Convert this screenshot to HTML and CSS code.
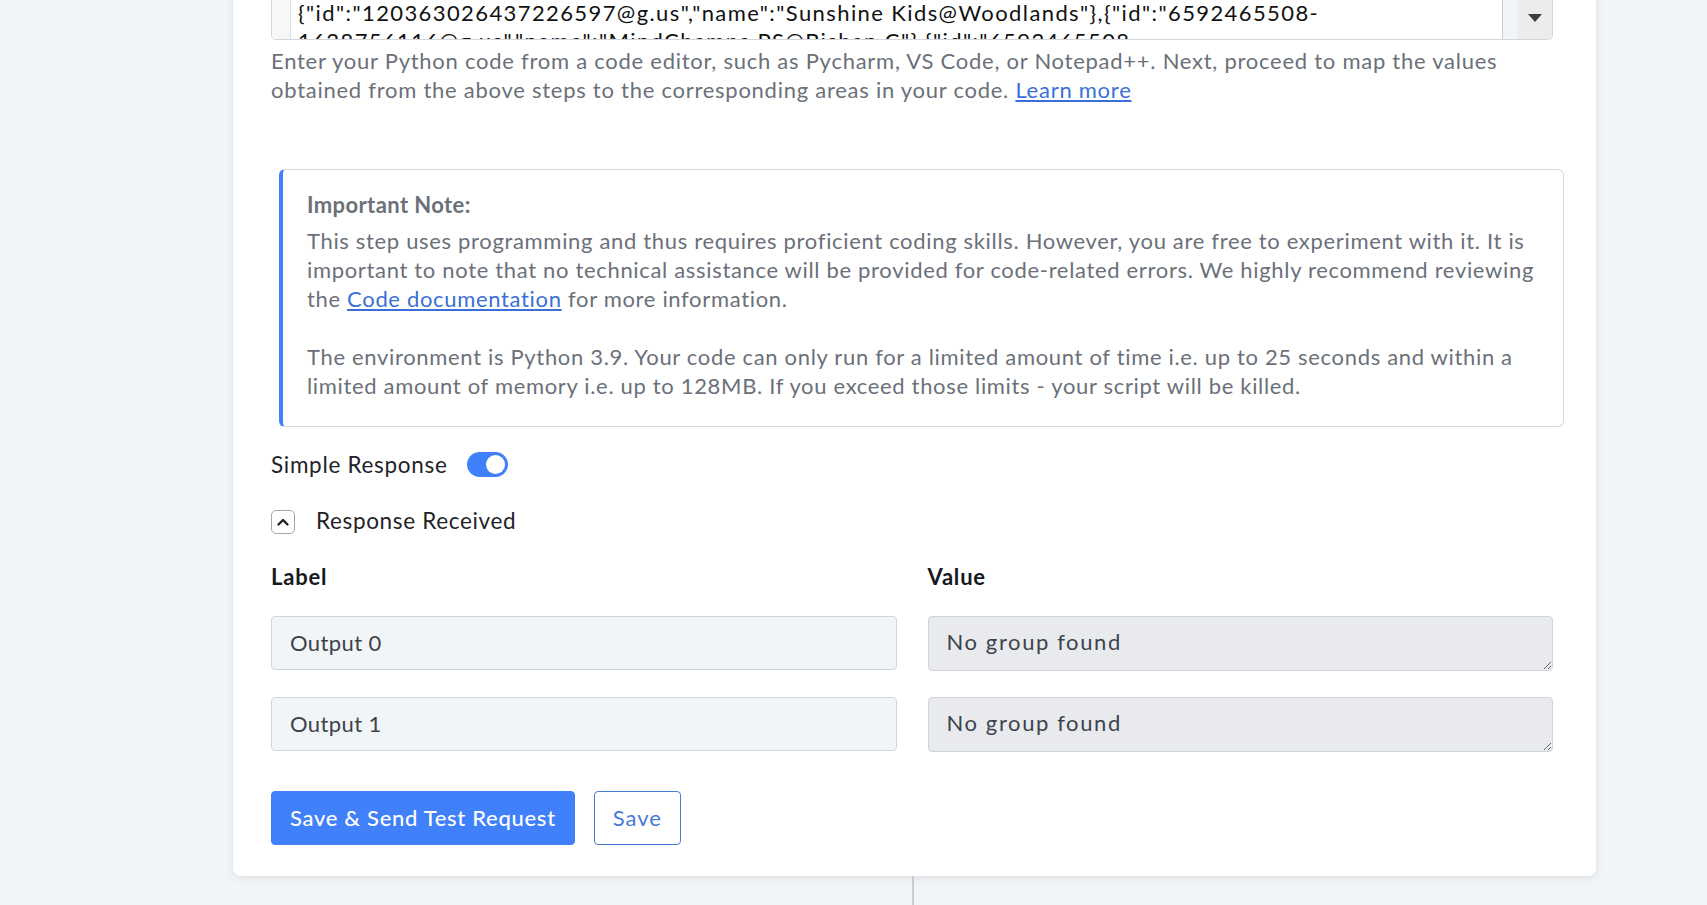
FILE: index.html
```html
<!DOCTYPE html>
<html>
<head>
  <title>Code Step</title>
  <link rel="stylesheet" href="styles.css">
</head>
<body>
  <div class="page">
    <div class="card">
      <div class="code-field">
        <div class="gutter"></div>
        <div class="code-text">{"id":"120363026437226597@g.us","name":"Sunshine Kids@Woodlands"},{"id":"6592465508-<br>1628756116@g.us","name":"MindChamps PS@Bishan C"},{"id":"6592465508</div>
        <div class="scroll-track"></div>
        <div class="scroll-btn"><span class="arrow"></span></div>
      </div>
      <p class="help">Enter your Python code from a code editor, such as Pycharm, VS Code, or Notepad++. Next, proceed to map the values<br>obtained from the above steps to the corresponding areas in your code. <a href="#">Learn more</a></p>

      <div class="note">
        <div class="note-title">Important Note:</div>
        <p>This step uses programming and thus requires proficient coding skills. However, you are free to experiment with it. It is<br>important to note that no technical assistance will be provided for code-related errors. We highly recommend reviewing<br>the <a href="#">Code documentation</a> for more information.</p>
        <p>The environment is Python 3.9. Your code can only run for a limited amount of time i.e. up to 25 seconds and within a<br>limited amount of memory i.e. up to 128MB. If you exceed those limits - your script will be killed.</p>
      </div>

      <div class="toggle-row">
        <span>Simple Response</span>
        <span class="switch on"><span class="knob"></span></span>
      </div>

      <div class="collapse-row">
        <span class="chevron">
          <svg width="14" height="14" viewBox="0 0 14 14"><path d="M2.5 9.5 L7 5 L11.5 9.5" fill="none" stroke="#1f2329" stroke-width="2.4" stroke-linecap="round" stroke-linejoin="round"/></svg>
        </span>
        <span class="collapse-title">Response Received</span>
      </div>

      <div class="outputs">
        <div class="col-head">Label</div>
        <div class="col-head">Value</div>
        <input class="field" type="text" value="Output 0">
        <textarea class="field value" readonly>No group found</textarea>
        <input class="field" type="text" value="Output 1">
        <textarea class="field value" readonly>No group found</textarea>
      </div>

      <div class="actions">
        <button class="btn btn-primary">Save &amp; Send Test Request</button>
        <button class="btn btn-outline">Save</button>
      </div>
    </div>
    <div class="divider"></div>
  </div>
</body>
</html>
```

FILE: styles.css
```css
body {
  margin: 0;
  background-color: #f2f5f8;
  font-family: Lato, "Open Sans", sans-serif;
  color: #1f2329;
  overflow: hidden;
}
.card {
  margin: -20px 0 0 233px;
  width: 1363px;
  box-sizing: border-box;
  padding: 0 43px 31px 38px;
  background-color: #ffffff;
  border-radius: 8px;
  box-shadow: 0px 2px 8px rgba(0, 0, 0, 0.09);
}
.code-field {
  display: flex;
  height: 59px;
  border: 1px solid #d3d6db;
  border-top: none;
  border-radius: 0 0 5px 5px;
  overflow: hidden;
}
.gutter {
  width: 18px;
  background-color: #f7f7f8;
  border-right: 1px solid #dcdfe3;
}
.code-text {
  flex: 1;
  padding: 19px 0 0 7px;
  font-size: 22px;
  letter-spacing: 1.4px;
  line-height: 28px;
  color: #111111;
  white-space: nowrap;
  overflow: hidden;
}
.scroll-track {
  width: 15px;
  border-left: 1px solid #c9ccd1;
  background-color: #f1f4f8;
}
.scroll-btn {
  width: 34px;
  background-color: #ececed;
  display: flex;
  justify-content: center;
  padding-top: 34px;
  box-sizing: border-box;
}
.arrow {
  width: 0;
  height: 0;
  border-left: 7px solid transparent;
  border-right: 7px solid transparent;
  border-top: 8px solid #3c3c3c;
}
.help {
  margin: 6px 0 0;
  font-size: 22px;
  letter-spacing: 0.74px;
  line-height: 29px;
  color: #6b7079;
  white-space: nowrap;
}
a {
  color: #3a6fd8;
  text-decoration: underline;
}
.note {
  margin: 65px -11px 0 8px;
  padding: 20px 25px 26px 24px;
  border: 1px solid #d3d8df;
  border-left: 4px solid #4080fb;
  border-radius: 6px;
  color: #6b7079;
  font-size: 22px;
  line-height: 29px;
}
.note-title {
  font-weight: 700;
  letter-spacing: 0.4px;
  margin-bottom: 7px;
}
.note p {
  margin: 0 0 29px;
  letter-spacing: 0.67px;
  white-space: nowrap;
}
.note p:last-child {
  margin-bottom: 0;
}
.toggle-row {
  margin-top: 25px;
  display: flex;
  align-items: center;
  gap: 19px;
  font-size: 22.5px;
  letter-spacing: 0.7px;
  height: 25px;
}
.switch {
  width: 41px;
  height: 25px;
  border-radius: 13px;
  background-color: #d1d5db;
  display: flex;
  align-items: center;
  padding: 0 3px;
  box-sizing: border-box;
}
.switch.on {
  background-color: #4080fb;
  justify-content: flex-end;
}
.knob {
  width: 19px;
  height: 19px;
  border-radius: 50%;
  background-color: #ffffff;
}
.collapse-row {
  margin-top: 33px;
  display: flex;
  align-items: center;
  gap: 21px;
  font-size: 22.5px;
  letter-spacing: 0.65px;
  height: 24px;
}
.collapse-title {
  padding-bottom: 4px;
}
.chevron {
  width: 24px;
  height: 24px;
  box-sizing: border-box;
  border: 1px solid #a3a8b0;
  border-radius: 5px;
  display: flex;
  align-items: center;
  justify-content: center;
}
.outputs {
  margin-top: 28px;
  display: grid;
  grid-template-columns: 1fr 1fr;
  column-gap: 31px;
  row-gap: 26px;
}
.col-head {
  font-size: 22px;
  font-weight: 700;
  letter-spacing: 0.8px;
  line-height: 29px;
  color: #16191d;
  margin-bottom: -1.5px;
}
.field {
  height: 54px;
  box-sizing: border-box;
  padding: 0 18px;
  border: 1px solid #d1d5db;
  border-radius: 4px;
  background-color: #f2f5f8;
  font-family: Lato, "Open Sans", sans-serif;
  font-size: 22px;
  letter-spacing: 0.4px;
  color: #3d434c;
  outline: none;
}
.field.value {
  height: 55px;
  padding-top: 11px;
  line-height: 28px;
  letter-spacing: 1.6px;
  background-color: #e8eaed;
  resize: vertical;
}
.actions {
  margin-top: 39px;
  display: flex;
  gap: 19px;
}
.btn {
  height: 54px;
  border-radius: 4px;
  font-family: Lato, "Open Sans", sans-serif;
  font-size: 22px;
  padding: 0 18px;
  cursor: pointer;
}
.btn-primary {
  background-color: #4080fb;
  border: 1px solid #4080fb;
  color: #ffffff;
  font-weight: 500;
  letter-spacing: 0.7px;
}
.btn-outline {
  background-color: #ffffff;
  border: 1px solid #4a7dd6;
  color: #4a78d8;
  letter-spacing: 1px;
}
.divider {
  margin-left: 912px;
  width: 2px;
  height: 30px;
  background-color: #c9cdd3;
}
```
